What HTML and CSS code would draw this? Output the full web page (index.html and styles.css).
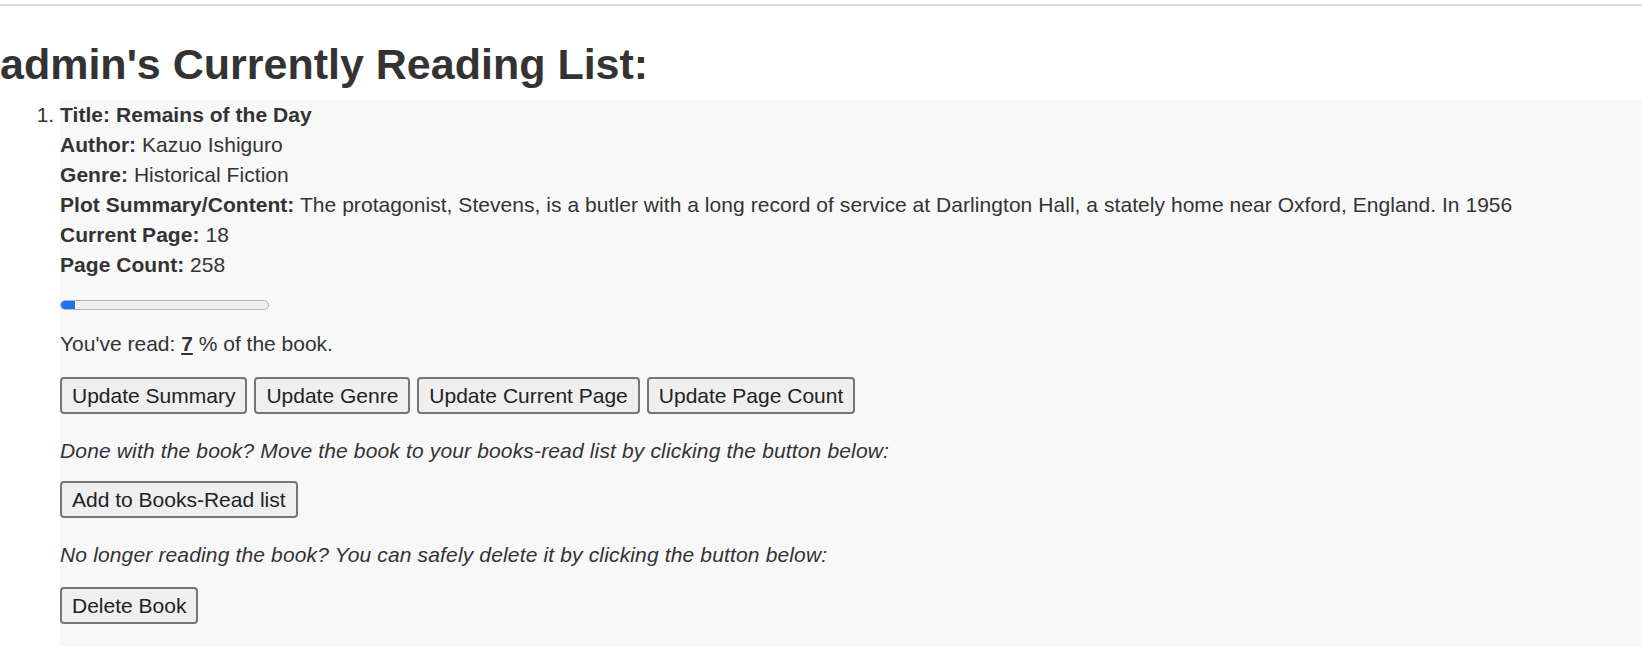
FILE: index.html
```html
<!DOCTYPE html>
<html lang="en">
<head>
<meta charset="utf-8">
<title>Currently Reading</title>
<link rel="stylesheet" href="styles.css">
</head>
<body>
<div class="topbar"></div>
<h1 class="page-title">admin's Currently Reading List:</h1>
<ol class="book-list">
  <li class="book">
    <div class="book-info">
      <div class="book-title">Title: Remains of the Day</div>
      <div><b>Author:</b> Kazuo Ishiguro</div>
      <div><b>Genre:</b> Historical Fiction</div>
      <div><b>Plot Summary/Content:</b> The protagonist, Stevens, is a butler with a long record of service at Darlington Hall, a stately home near Oxford, England. In 1956</div>
      <div><b>Current Page:</b> 18</div>
      <div><b>Page Count:</b> 258</div>
    </div>
    <div class="progress"><div class="progress-fill" style="width: 7%"></div></div>
    <p class="read-pct">You've read: <b class="pct">7</b> % of the book.</p>
    <div class="actions">
      <button class="btn">Update Summary</button>
      <button class="btn">Update Genre</button>
      <button class="btn">Update Current Page</button>
      <button class="btn">Update Page Count</button>
    </div>
    <p class="note">Done with the book? Move the book to your books-read list by clicking the button below:</p>
    <div class="single"><button class="btn">Add to Books-Read list</button></div>
    <p class="note">No longer reading the book? You can safely delete it by clicking the button below:</p>
    <div class="single last"><button class="btn">Delete Book</button></div>
  </li>
</ol>
</body>
</html>
```
FILE: styles.css
```css
html, body {
  margin: 0;
  padding: 0;
  background: #ffffff;
}
body {
  font-family: "Liberation Sans", Arial, Helvetica, sans-serif;
  color: #333333;
  font-size: 21px;
  line-height: 30px;
}
.topbar {
  margin-top: 4px;
  height: 0;
  border-top: 2px solid #dcdcdc;
}
.page-title {
  margin: 34px 0 12px 0;
  font-size: 43px;
  line-height: 48px;
  font-weight: bold;
  color: #333333;
}
.book-list {
  margin: 0;
  padding: 0 0 0 60px;
}
.book {
  background: #f8f8f8;
  padding: 0 0 22px 0;
}
.book-info {
  letter-spacing: 0.05px;
}
.book-title {
  font-weight: bold;
}
.progress {
  margin-top: 20px;
  width: 207px;
  height: 8px;
  border: 1px solid #b4b4b4;
  border-radius: 5px;
  background: #efefef;
  overflow: hidden;
}
.progress-fill {
  height: 100%;
  background: #1a74ee;
  border-radius: 4px 0 0 4px;
}
.read-pct {
  margin: 19px 0 0 0;
}
.pct {
  text-decoration: underline;
}
.actions {
  margin-top: 18px;
  display: flex;
  gap: 7px;
}
.btn {
  font-family: "Liberation Sans", Arial, Helvetica, sans-serif;
  font-size: 21px;
  line-height: 24px;
  color: #222222;
  background: #efefef;
  border: 2px solid #767676;
  border-radius: 4px;
  padding: 5px 10px;
  height: 37px;
}
.note {
  margin: 22px 0 0 0;
  font-style: italic;
  letter-spacing: 0.15px;
}
.single {
  margin-top: 15px;
}
.single.last {
  margin-top: 17px;
}
```
